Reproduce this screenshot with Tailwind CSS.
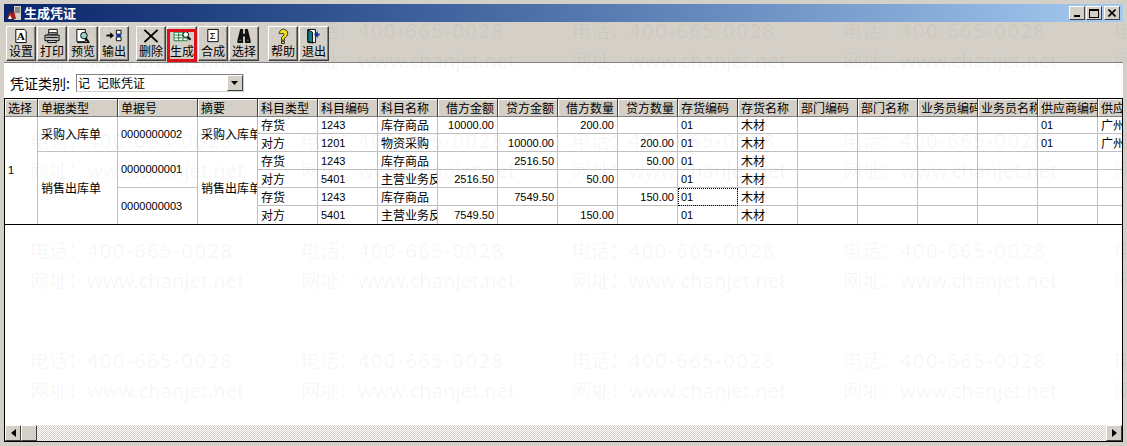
<!DOCTYPE html>
<html lang="zh-CN">
<head>
    <meta charset="UTF-8">
    <title>生成凭证</title>
    <script src="https://cdn.jsdelivr.net/npm/@tailwindcss/browser@4"></script>
</head>
<body class="relative w-[1127px] h-[446px] overflow-hidden bg-[#d4d0c8] font-['Noto_Sans_CJK_SC',sans-serif] text-[12px] text-black">
<div class="flex flex-col h-full px-[4px] py-[4px]">

    <!-- Title bar -->
    <header class="flex items-center h-[18px] shrink-0 bg-gradient-to-r from-[#0a246a] to-[#a6caf0] text-white">
        <svg class="ml-[2px] w-[16px] h-[16px]" viewBox="0 0 16 16">
            <rect x="8" y="1" width="7" height="14" fill="#d4d0c8"/>
            <path d="M9 3h5M9 5h5M9 7h5" stroke="#444"/>
            <path d="M1 14l3-8 2 3 2-4 2 9z" fill="#a02020"/>
            <path d="M2 14l2-4 2 4z" fill="#fff"/>
        </svg>
        <span class="ml-[2px] font-bold text-[13px]">生成凭证</span>
        <div class="ml-auto flex mr-[3px]">
            <div class="flex items-end justify-center pb-[2px] w-[16px] h-[14px] bg-[#d4d0c8] border border-t-white border-l-white border-r-[#404040] border-b-[#404040]"><div class="w-[6px] h-[2px] bg-black"></div></div>
            <div class="ml-[1px] flex items-center justify-center w-[16px] h-[14px] bg-[#d4d0c8] border border-t-white border-l-white border-r-[#404040] border-b-[#404040]"><div class="w-[10px] h-[9px] border border-t-2 border-black"></div></div>
            <div class="ml-[2px] flex items-center justify-center w-[16px] h-[14px] bg-[#d4d0c8] border border-t-white border-l-white border-r-[#404040] border-b-[#404040]">
                <svg class="w-[8px] h-[8px]" viewBox="0 0 8 8"><path d="M0.5 0.5l7 7M7.5 0.5l-7 7" stroke="#000" stroke-width="1.6"/></svg>
            </div>
        </div>
    </header>

    <!-- Toolbar -->
    <div class="flex h-[41px] shrink-0 pt-[4px] pl-[2px] border-b border-[#808080]">
        <div class="flex gap-[1px]">
            <button class="w-[30px] h-[35px] flex flex-col items-center border border-t-white border-l-white border-r-[#404040] border-b-[#404040] shadow-[inset_-1px_-1px_0_#808080]">
                <svg class="w-[16px] h-[16px] mt-[1px]" viewBox="0 0 16 17"><path d="M2.5 1.500h9l2 2v12h-11z" fill="#fff" stroke="#000"/><text x="3.500" y="13" font-size="12" font-weight="bold" font-family="Liberation Serif">A</text></svg>
                <span class="leading-[14px]">设置</span>
            </button>
            <button class="w-[30px] h-[35px] flex flex-col items-center border border-t-white border-l-white border-r-[#404040] border-b-[#404040] shadow-[inset_-1px_-1px_0_#808080]">
                <svg class="w-[20px] h-[16px] mt-[1px]" viewBox="0 0 20 17"><path d="M6.500 1.500h9v5h-9z" fill="#fff" stroke="#000"/><path d="M2.500 7.500h15v6h-15zM5 7l2-2h8" fill="#c0c0c0" stroke="#000"/><path d="M5.500 13.500h9v2h-9z" fill="#fff" stroke="#000"/><path d="M4 10h12" stroke="#000"/></svg>
                <span class="leading-[14px]">打印</span>
            </button>
            <button class="w-[30px] h-[35px] flex flex-col items-center border border-t-white border-l-white border-r-[#404040] border-b-[#404040] shadow-[inset_-1px_-1px_0_#808080]">
                <svg class="w-[18px] h-[16px] mt-[1px]" viewBox="0 0 18 17"><path d="M2.500 1.500h9v13h-9z" fill="#fff" stroke="#000"/><circle cx="10" cy="8" r="3.500" fill="#9fd0d0" stroke="#000"/><path d="M12 11l3 4" stroke="#000" stroke-width="2"/><path d="M3 15.500h13" stroke="#000"/></svg>
                <span class="leading-[14px]">预览</span>
            </button>
            <button class="w-[30px] h-[35px] flex flex-col items-center border border-t-white border-l-white border-r-[#404040] border-b-[#404040] shadow-[inset_-1px_-1px_0_#808080]">
                <svg class="w-[18px] h-[16px] mt-[1px]" viewBox="0 0 18 17"><path d="M1 8h5" stroke="#000" stroke-width="2"/><path d="M5 4.500l4 3.500-4 3.500z" fill="#000"/><path d="M11.500 2.500h5v4h-5zM11.500 9.500h5v4h-5z" fill="#fff" stroke="#000"/><path d="M11.500 6.500h5v3h-5z" fill="#1030a0"/></svg>
                <span class="leading-[14px]">输出</span>
            </button>
        </div>
        <div class="flex gap-[1px] ml-[7px]">
            <button class="w-[30px] h-[35px] flex flex-col items-center border border-t-white border-l-white border-r-[#404040] border-b-[#404040] shadow-[inset_-1px_-1px_0_#808080]">
                <svg class="w-[18px] h-[16px] mt-[1px]" viewBox="0 0 18 17"><path d="M2 2l14 13M16 2L2 15" stroke="#000" stroke-width="2"/></svg>
                <span class="leading-[14px]">删除</span>
            </button>
            <button class="relative w-[30px] h-[35px] flex flex-col items-center border border-t-white border-l-white border-r-[#404040] border-b-[#404040] shadow-[inset_-1px_-1px_0_#808080]">
                <svg class="w-[20px] h-[16px] mt-[1px]" viewBox="0 0 20 17"><path d="M1.500 4.500h14v9h-14z" fill="#fff" stroke="#208040"/><path d="M1.500 7.500h14M1.500 10.500h14M6.500 4.500v9M11 4.500v9" stroke="#208040"/><circle cx="14" cy="7" r="3" fill="#fff" stroke="#000"/><path d="M16 9.500l3 3" stroke="#000" stroke-width="2"/></svg>
                <span class="leading-[14px]">生成</span>
                <div class="absolute top-[2px] -bottom-[2px] -left-[1px] -right-[1px] border-[3px] border-[#e0101a]"></div>
            </button>
            <button class="w-[30px] h-[35px] flex flex-col items-center border border-t-white border-l-white border-r-[#404040] border-b-[#404040] shadow-[inset_-1px_-1px_0_#808080]">
                <svg class="w-[14px] h-[16px] mt-[1px]" viewBox="0 0 14 17"><path d="M1.500 1.500h11v13h-11z" fill="#fff" stroke="#000"/><text x="3.500" y="12" font-size="10" font-family="Liberation Sans">Σ</text></svg>
                <span class="leading-[14px]">合成</span>
            </button>
            <button class="w-[30px] h-[35px] flex flex-col items-center border border-t-white border-l-white border-r-[#404040] border-b-[#404040] shadow-[inset_-1px_-1px_0_#808080]">
                <svg class="w-[20px] h-[16px] mt-[1px]" viewBox="0 0 20 17"><path d="M6 1h3v5h2V1h3l3 12v3h-6V9H9v7H3v-3z" fill="#111"/><path d="M5 13h2M13 13h2" stroke="#888"/></svg>
                <span class="leading-[14px]">选择</span>
            </button>
        </div>
        <div class="flex gap-[1px] ml-[9px]">
            <button class="w-[30px] h-[35px] flex flex-col items-center border border-t-white border-l-white border-r-[#404040] border-b-[#404040] shadow-[inset_-1px_-1px_0_#808080]">
                <svg class="w-[16px] h-[16px] mt-[1px]" viewBox="0 0 16 17"><path d="M4 6a4.500 4.500 0 1 1 7 3.500L9.500 11v2h-3v-3l2-2a1.200 1.200 0 1 0-1.500-2z" fill="#f0e020" stroke="#000" stroke-width="0.8"/><rect x="6.500" y="14" width="3" height="2.500" fill="#f0e020" stroke="#000" stroke-width="0.8"/></svg>
                <span class="leading-[14px]">帮助</span>
            </button>
            <button class="w-[30px] h-[35px] flex flex-col items-center border border-t-white border-l-white border-r-[#404040] border-b-[#404040] shadow-[inset_-1px_-1px_0_#808080]">
                <svg class="w-[20px] h-[16px] mt-[1px]" viewBox="0 0 20 17"><path d="M3.500 1.500h8v14h-8z" fill="#fff" stroke="#000"/><path d="M3.500 2l5 2.500v11.500l-5-2z" fill="#108080" stroke="#000"/><path d="M13 7h3" stroke="#1030a0" stroke-width="2"/><path d="M15 3.500L19 7l-4 3.500z" fill="#1030a0" transform="matrix(-1 0 0 1 29 0)"/></svg>
                <span class="leading-[14px]">退出</span>
            </button>
        </div>
    </div>

    <!-- Voucher type -->
    <div class="flex items-center h-[35px] shrink-0 bg-white pl-[6px] pt-[4px]">
        <span class="text-[14px] leading-none">凭证类别:</span>
        <div class="ml-[6px] flex items-center w-[168px] h-[18px] bg-white border border-t-[#808080] border-l-[#808080] border-r-[#d4d0c8] border-b-[#d4d0c8]">
            <span class="pl-[1px] leading-none">记</span>
            <span class="ml-[7px] leading-none">记账凭证</span>
            <div class="ml-auto flex items-center justify-center w-[16px] h-[16px] bg-[#d4d0c8] border border-t-white border-l-white border-r-[#404040] border-b-[#404040]">
                <svg class="w-[7px] h-[4px]" viewBox="0 0 7 4"><path d="M0 0h7L3.500 4z" fill="#000"/></svg>
            </div>
        </div>
    </div>

    <!-- Grid -->
    <div class="flex-1 min-h-0 flex flex-col bg-white border border-black">
        <div class="flex-1 min-h-0 overflow-hidden">
            <table id="grid" class="table-fixed border-separate border-spacing-0 w-[1153px]">
                <colgroup id="cols"></colgroup>
                <thead><tr id="gridHead"></tr></thead>
                <tbody id="gridBody"></tbody>
            </table>
            <div class="h-px bg-black"></div>
        </div>
        <!-- Horizontal scrollbar -->
        <div class="flex h-[16px] shrink-0 bg-[repeating-conic-gradient(#d4d0c8_0_25%,#fff_0_50%)] bg-[length:2px_2px]">
            <div class="flex items-center justify-center w-[16px] bg-[#d4d0c8] border border-t-white border-l-white border-r-[#404040] border-b-[#404040]">
                <svg class="w-[5px] h-[8px]" viewBox="0 0 5 8"><path d="M5 0v8L0 4z" fill="#000"/></svg>
            </div>
            <div class="w-[16px] bg-[#d4d0c8] border border-t-white border-l-white border-r-[#404040] border-b-[#404040]"></div>
            <div class="ml-auto flex items-center justify-center w-[16px] bg-[#d4d0c8] border border-t-white border-l-white border-r-[#404040] border-b-[#404040]">
                <svg class="w-[5px] h-[8px]" viewBox="0 0 5 8"><path d="M0 0v8l5-4z" fill="#000"/></svg>
            </div>
        </div>
    </div>
</div>

<!-- Watermark, lies over the whole window below the title bar -->
<div id="watermark" class="absolute top-[15px] left-[30px] grid grid-cols-[repeat(5,271px)] auto-rows-[110px] pointer-events-none text-black/[0.05] text-[19px] font-['Noto_Sans_CJK_SC',sans-serif] whitespace-nowrap"></div>

<script>
    const headers = ['选择', '单据类型', '单据号', '摘要', '科目类型', '科目编码', '科目名称', '借方金额', '贷方金额', '借方数量', '贷方数量', '存货编码', '存货名称', '部门编码', '部门名称', '业务员编码', '业务员名称', '供应商编码', '供应商名称'];
    const widths = [33, 80, 80, 60];

    // one line per voucher row, from 科目类型 onwards
    const rows = [
        ['存货', '1243', '库存商品', '10000.00', '', '200.00', '', '01', '木材', '', '', '', '', '01', '广州市'],
        ['对方', '1201', '物资采购', '', '10000.00', '', '200.00', '01', '木材', '', '', '', '', '01', '广州市'],
        ['存货', '1243', '库存商品', '', '2516.50', '', '50.00', '01', '木材', '', '', '', '', '', ''],
        ['对方', '5401', '主营业务反', '2516.50', '', '50.00', '', '01', '木材', '', '', '', '', '', ''],
        ['存货', '1243', '库存商品', '', '7549.50', '', '150.00', '01', '木材', '', '', '', '', '', ''],
        ['对方', '5401', '主营业务反', '7549.50', '', '150.00', '', '01', '木材', '', '', '', '', '', '']
    ];

    // merged cells on the left of each row
    const merged = {
        0: [['1', 6, 0], ['采购入库单', 2, 1], ['0000000002', 2, 2], ['采购入库单', 2, 3]],
        2: [['销售出库单', 4, 1], ['0000000001', 2, 2], ['销售出库单', 4, 3]],
        4: [['0000000003', 2, 2]]
    };

    const cols = document.getElementById('cols');
    const head = document.getElementById('gridHead');
    headers.forEach((text, i) => {
        const col = document.createElement('col');
        col.style.width = (widths[i] || 60) + 'px';
        cols.appendChild(col);
        const th = document.createElement('th');
        th.className = 'h-[18px] p-0 font-normal bg-[#d4d0c8] border-r border-b border-r-[#404040] border-b-[#808080] shadow-[inset_1px_1px_0_#fff]';
        const right = i >= 7 && i <= 10;
        th.innerHTML = `<div class="overflow-hidden whitespace-nowrap px-[3px] leading-[17px] ${right ? 'text-right' : 'text-left'}">${text}</div>`;
        head.appendChild(th);
    });

    function fillCell(td, text, right) {
        const isNum = /^[\d.]+$/.test(text);
        const font = isNum ? "font-['Liberation_Sans',sans-serif] text-[11px]" : '';
        td.innerHTML = `<div class="overflow-hidden whitespace-nowrap px-[3px] ${right ? 'text-right' : 'text-left'} ${font}">${text}</div>`;
    }

    const body = document.getElementById('gridBody');
    rows.forEach((row, r) => {
        const tr = document.createElement('tr');
        tr.className = r === 0 ? 'h-[17px]' : 'h-[18px]';
        (merged[r] || []).forEach(([text, span, c]) => {
            const td = document.createElement('td');
            td.rowSpan = span;
            const last = r + span === rows.length;
            td.className = 'p-0 border-[#c0c0c0] border-r' + (last ? '' : ' border-b');
            fillCell(td, text, false);
            tr.appendChild(td);
        });
        row.forEach((text, c) => {
            const td = document.createElement('td');
            td.className = 'p-0 leading-[16px] border-[#c0c0c0] border-r' + (r === rows.length - 1 ? '' : ' border-b');
            if (r === 4 && c === 7) td.classList.add('outline-1', 'outline-dotted', '-outline-offset-1', 'outline-black');
            fillCell(td, text, c >= 3 && c <= 6);
            tr.appendChild(td);
        });
        body.appendChild(tr);
    });

    const watermark = document.getElementById('watermark');
    for (let i = 0; i < 20; i++) {
        const cell = document.createElement('div');
        cell.innerHTML = `
            <div class="h-[30px] leading-[30px]">电话：<span class="font-['Noto_Sans',sans-serif] text-[20px] tracking-[1.6px]">400-665-0028</span></div>
            <div class="h-[30px] leading-[30px]">网址：<span class="font-['Noto_Sans',sans-serif] text-[20px]">www.chanjet.net</span></div>`;
        watermark.appendChild(cell);
    }
</script>
</body>
</html>
